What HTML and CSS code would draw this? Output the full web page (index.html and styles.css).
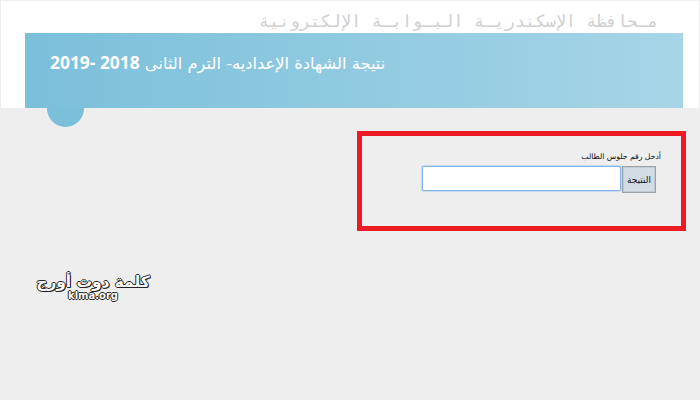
FILE: index.html
```html
<!DOCTYPE html>
<html lang="ar">
<head>
<meta charset="utf-8">
<title>نتيجة الشهادة الإعدادية</title>
<link rel="stylesheet" href="styles.css">
</head>
<body>
<header class="top">
  <div class="site-name" dir="rtl">مـحافظة الإسكندريـة البـوابـة الإلكترونية</div>
  <div class="banner">
    <h1 class="banner-title" dir="rtl">نتيجة الشهادة الإعداديه- الترم الثانى <b>2018 -2019</b></h1>
    <span class="tab"></span>
  </div>
</header>
<main class="content">
  <form class="box" dir="rtl">
    <label class="label" for="seat">أدخل رقم جلوس الطالب</label>
    <div class="row">
      <button class="btn" type="button">النتيجة</button>
      <input class="field" id="seat" type="text">
    </div>
  </form>
  <div class="logo">
    <div class="logo-ar" dir="rtl">كلمة دوت أورج</div>
    <div class="logo-en">klma.org</div>
  </div>
</main>
</body>
</html>
```

FILE: styles.css
```css
* { box-sizing: border-box; }
html, body { margin: 0; height: 100%; }
body {
  width: 700px;
  height: 400px;
  overflow: hidden;
  background: #eee;
  font-family: "DejaVu Sans", "Noto Sans", sans-serif;
}
.top {
  height: 107px;
  margin: 1px 1px 0;
  background: #fff;
  padding: 0 0 0 24px;
  display: flex;
  flex-direction: column;
}
.site-name {
  height: 32px;
  width: 658px;
  padding: 9px 25px 0 0;
  font-family: "DejaVu Sans Mono", monospace;
  font-size: 17px;
  line-height: 22px;
  color: #cfcfcf;
  white-space: nowrap;
}
.banner {
  position: relative;
  width: 658px;
  height: 75px;
  background: linear-gradient(90deg, #7bbfdb, #a6d5e6);
  padding: 14px 25px 0;
}
.banner-title {
  margin: 0;
  font-size: 16.3px;
  line-height: 30px;
  font-weight: normal;
  color: #fff;
  white-space: nowrap;
  text-align: left;
}
.banner-title b {
  font-family: "Open Sans", sans-serif;
  font-size: 17.4px;
  font-weight: 700;
}
.tab {
  position: absolute;
  left: 22px;
  top: 75px;
  width: 37px;
  height: 19px;
  background: #7bbfdb;
  border-radius: 0 0 19px 19px;
}
.content {
  display: flex;
  flex-direction: column;
  padding: 23px 14px 0 35px;
}
.box {
  align-self: flex-end;
  width: 329px;
  height: 100px;
  border: 5px solid #ed1c24;
  padding: 15px 20px 0 0;
  display: flex;
  flex-direction: column;
  align-items: flex-start;
}
.label {
  font-size: 7.7px;
  line-height: 12px;
  color: #111;
  margin-bottom: 3px;
}
.row { display: flex; margin-right: 5px; }
.btn {
  width: 34px;
  height: 27px;
  padding: 0;
  background: #d2dce5;
  border: 1px solid #9aa2a8;
  box-shadow: inset 0 0 0 1px #c2cbd3;
  outline: 0;
  font: 9px "DejaVu Sans", sans-serif;
  color: #111;
}
.field {
  width: 199px;
  height: 25px;
  margin-right: 1px;
  background: #fff;
  border: 1px solid #7fb4ee;
  border-radius: 2px;
  box-shadow: 0 0 0 1px rgba(127, 180, 238, .35);
  outline: 0;
}
.logo {
  margin-top: 43px;
  width: 116px;
  text-align: center;
}
.logo-ar {
  font-size: 15.4px;
  line-height: 16px;
  font-weight: bold;
  color: #fff;
  white-space: nowrap;
  text-shadow: -1px 0 #222, 1px 0 #222, 0 -1px #222, 0 1px #222, 1px 1px #222;
}
.logo-en {
  font-size: 10px;
  line-height: 11px;
  font-weight: bold;
  color: #fff;
  text-shadow: -1px 0 #222, 1px 0 #222, 0 -1px #222, 0 1px #222;
}
```
